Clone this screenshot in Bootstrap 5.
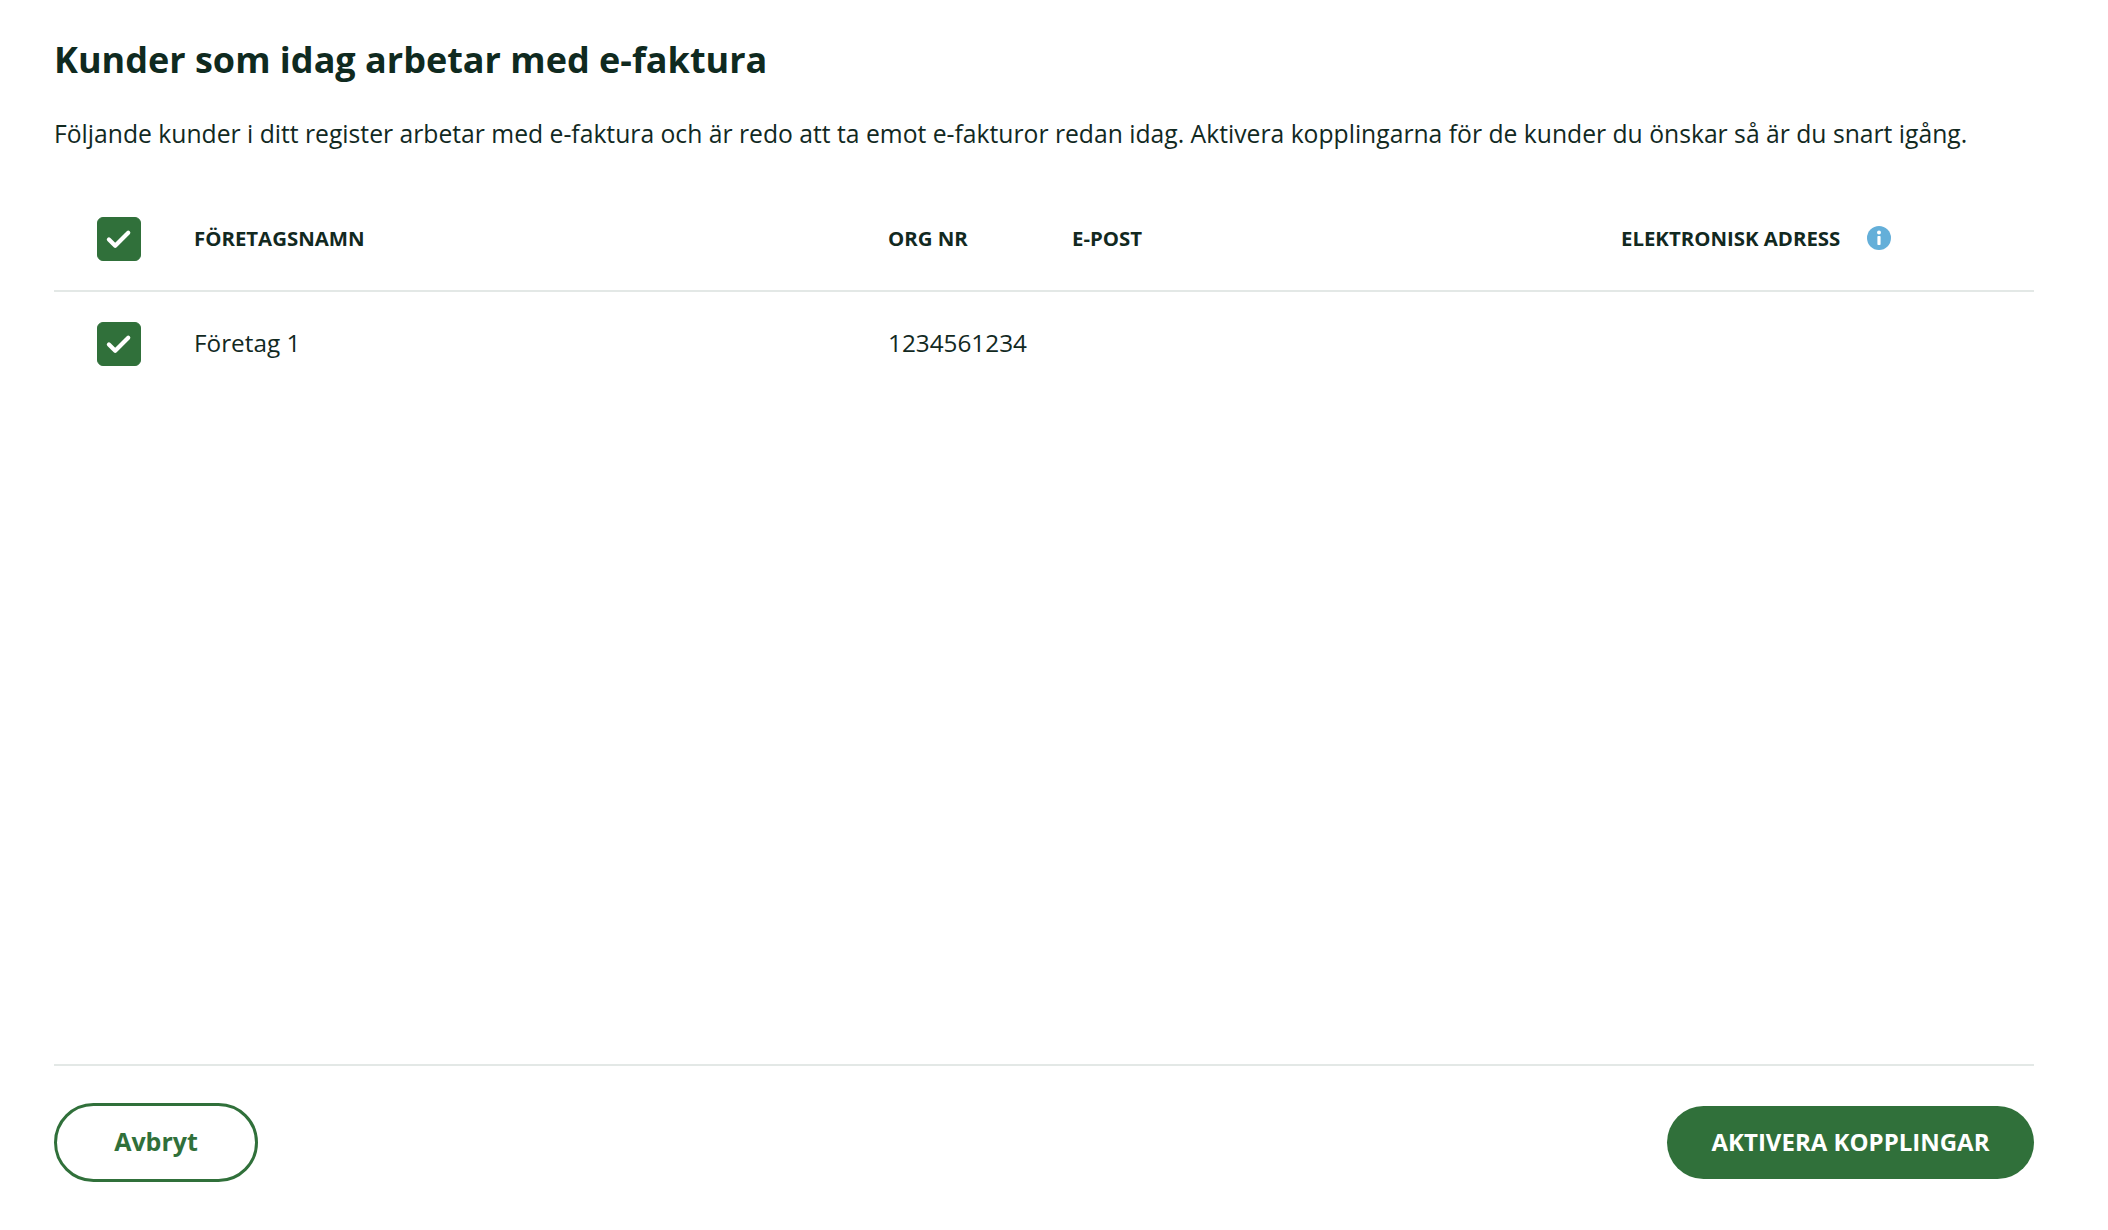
<!DOCTYPE html>
<html lang="sv">
<head>
    <meta charset="UTF-8">
    <meta name="viewport" content="width=device-width, initial-scale=1.0">
    <title>Kunder som idag arbetar med e-faktura</title>
    <link href="https://cdn.jsdelivr.net/npm/bootstrap@5.3.0/dist/css/bootstrap.min.css" rel="stylesheet">
    <style>
        body { font-family: "Open Sans", sans-serif; color: #12291f; background-color: #fff; }
        .page-wrap { height: 1230px; padding: 0 74px 48px 54px; }
        .page-title { font-size: 36px; font-weight: 700; line-height: 44px; margin: 38px 0 36px; color: #0f2a20; }
        .page-intro { font-size: 24.7px; line-height: 32px; margin: 0 0 37px; }
        .kund-table { --bs-table-color: #12291f; margin: 0; }
        .kund-table th { font-size: 20.4px; font-weight: 700; text-transform: uppercase; padding: 0; height: 104px; vertical-align: middle; border-bottom: 2px solid #e3e8e6; }
        .kund-table td { font-size: 24.3px; padding: 0 0 0; height: 104px; vertical-align: middle; border: 0; }
        .col-check { width: 140px; padding-left: 43px !important; }
        .col-name { width: 694px; }
        .col-org { width: 184px; }
        .col-mail { width: 549px; }
        .kund-check { width: 44px; height: 44px; margin: 0; display: block; border-radius: 6px !important; }
        .kund-check:checked { background-color: #30703a; border-color: #30703a; }
        .kund-check:checked[type=checkbox] { --bs-form-check-bg-image: url("data:image/svg+xml,%3csvg xmlns='http://www.w3.org/2000/svg' viewBox='0 0 20 20'%3e%3cpath fill='none' stroke='%23fff' stroke-linecap='round' stroke-linejoin='round' stroke-width='2' d='M5.2 10.2l3 3 6.2-6.2'/%3e%3c/svg%3e"); }
        .info-dot { width: 24px; height: 24px; margin-left: 21px; vertical-align: -4px; }
        .page-foot { border-top: 2px solid #e3e8e6; padding-top: 37px; }
        .btn-avbryt { width: 204px; height: 79px; padding-bottom: 7px; font-size: 25px; font-weight: 700; color: #30703a; border: 3px solid #30703a; border-radius: 40px; background: #fff; }
        .btn-aktivera { width: 367px; height: 73px; padding-bottom: 8px; font-size: 24px; font-weight: 700; color: #fff; background-color: #30703a; border: 0; border-radius: 37px; text-transform: uppercase; }
    </style>
</head>
<body>
    <div class="page-wrap d-flex flex-column">
        <h1 class="page-title">Kunder som idag arbetar med e-faktura</h1>
        <p class="page-intro">Följande kunder i ditt register arbetar med e-faktura och är redo att ta emot e-fakturor redan idag. Aktivera kopplingarna för de kunder du önskar så är du snart igång.</p>

        <!-- Kundlista -->
        <div class="flex-grow-1">
            <table class="table kund-table">
                <thead>
                    <tr>
                        <th class="col-check"><input class="form-check-input kund-check" type="checkbox" checked aria-label="Välj alla"></th>
                        <th class="col-name">Företagsnamn</th>
                        <th class="col-org">Org nr</th>
                        <th class="col-mail">E-post</th>
                        <th>Elektronisk adress
                            <svg class="info-dot" viewBox="0 0 24 24" aria-hidden="true">
                                <circle cx="12" cy="12" r="12" fill="#64afd9"/>
                                <circle cx="12" cy="6.5" r="2" fill="#fff"/>
                                <rect x="10.4" y="10" width="3.2" height="9" rx="0.8" fill="#fff"/>
                            </svg>
                        </th>
                    </tr>
                </thead>
                <tbody>
                    <tr>
                        <td class="col-check"><input class="form-check-input kund-check" type="checkbox" checked aria-label="Välj Företag 1"></td>
                        <td>Företag 1</td>
                        <td>1234561234</td>
                        <td></td>
                        <td></td>
                    </tr>
                </tbody>
            </table>
        </div>

        <!-- Knappar -->
        <div class="page-foot d-flex justify-content-between align-items-center">
            <button type="button" class="btn btn-avbryt">Avbryt</button>
            <button type="button" class="btn btn-aktivera">Aktivera kopplingar</button>
        </div>
    </div>
    <script src="https://cdn.jsdelivr.net/npm/bootstrap@5.3.0/dist/js/bootstrap.bundle.min.js"></script>
</body>
</html>
